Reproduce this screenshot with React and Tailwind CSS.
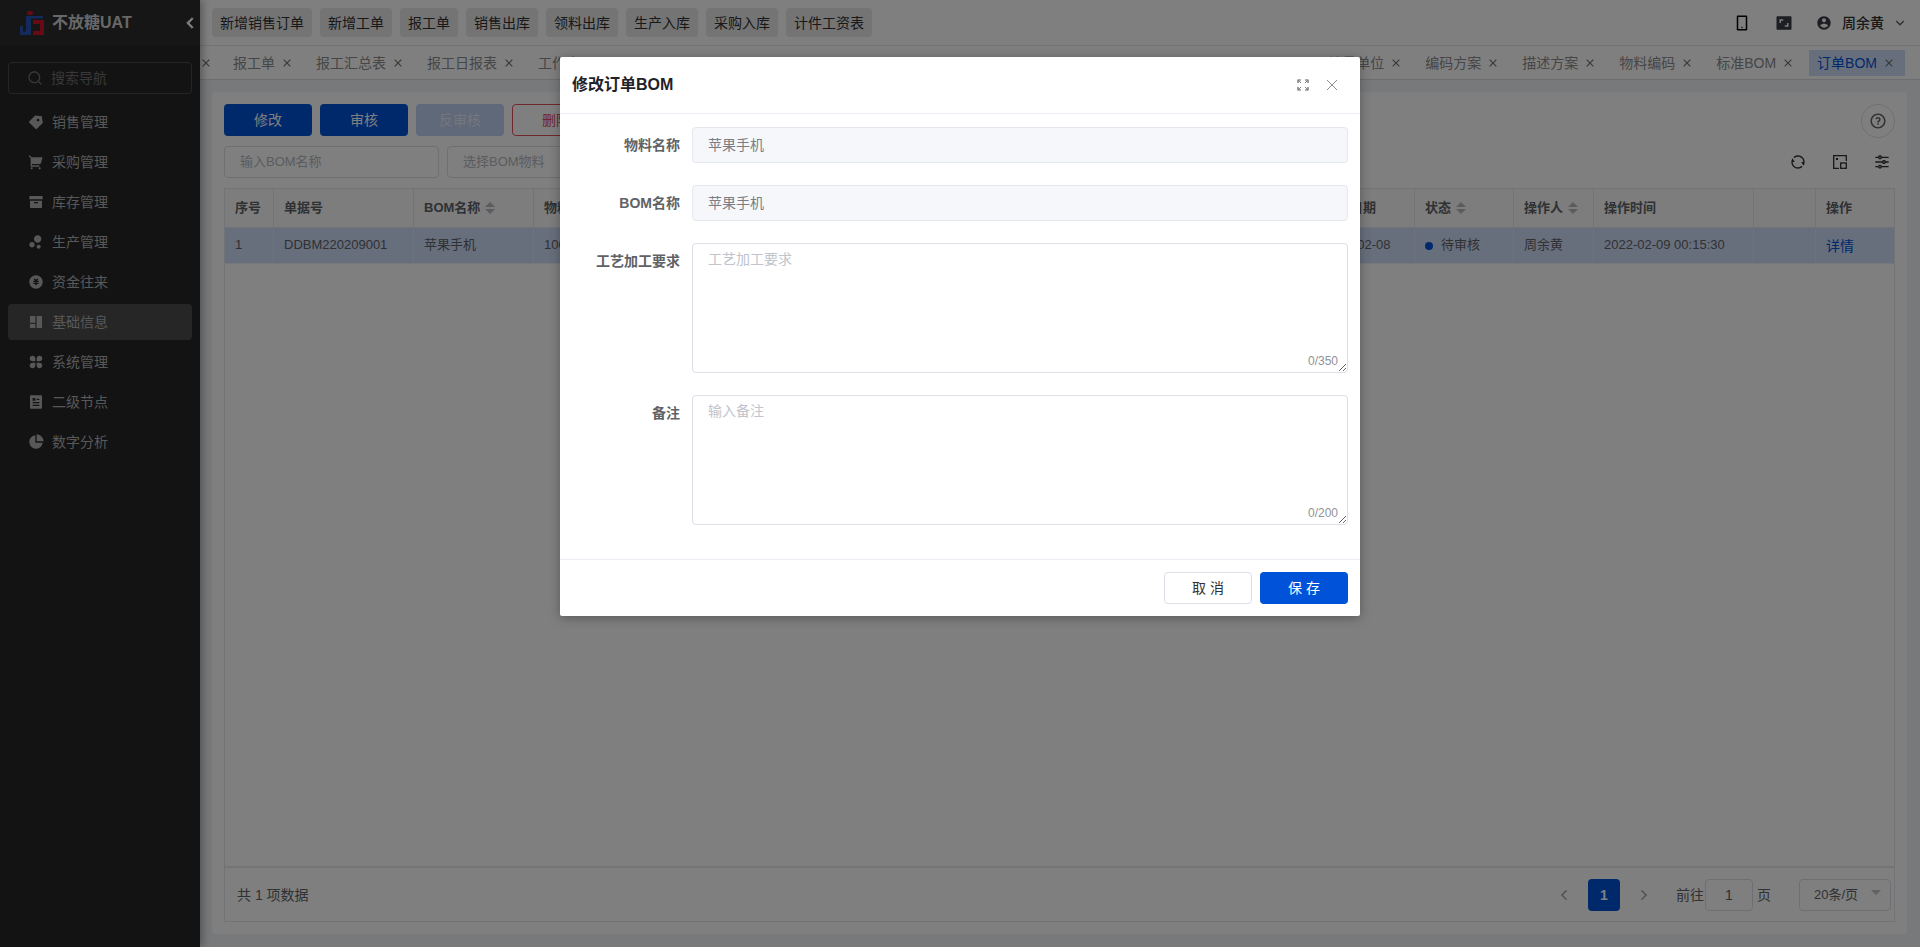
import {
  RiPriceTag3Fill,
  RiShoppingCart2Fill,
  RiArchiveFill,
  RiBubbleChartFill,
  RiMoneyCnyCircleFill,
  RiAppsFill,
  RiArticleFill,
  RiPieChart2Fill,
  RiSearchLine,
  RiArrowLeftSLine,
  RiArrowRightSLine,
  RiArrowDownSLine,
  RiCloseLine,
  RiSmartphoneLine,
  RiAspectRatioFill,
  RiAccountCircleFill,
  RiQuestionLine,
  RiRefreshLine,
  RiEqualizerLine,
} from "react-icons/ri";

function LayoutIcon({ className }) {
  return (
    <svg viewBox="0 0 24 24" fill="currentColor" className={className}>
      <path d="M3 3h8v10H3zM3 15h8v6H3zM13 3h8v18h-8z" />
    </svg>
  );
}

const menus = [
  { name: "销售管理", icon: RiPriceTag3Fill },
  { name: "采购管理", icon: RiShoppingCart2Fill },
  { name: "库存管理", icon: RiArchiveFill },
  { name: "生产管理", icon: RiBubbleChartFill },
  { name: "资金往来", icon: RiMoneyCnyCircleFill },
  { name: "基础信息", icon: LayoutIcon, active: true },
  { name: "系统管理", icon: RiAppsFill },
  { name: "二级节点", icon: RiArticleFill },
  { name: "数字分析", icon: RiPieChart2Fill },
];

const quickLinks = ["新增销售订单", "新增工单", "报工单", "销售出库", "领料出库", "生产入库", "采购入库", "计件工资表"];
const leftTabs = ["报工单", "报工汇总表", "报工日报表", "工作中心"];
const rightTabs = ["计量单位", "编码方案", "描述方案", "物料编码", "标准BOM"];

const columns = [
  { title: "序号", value: "1", width: "w-[49px]" },
  { title: "单据号", value: "DDBM220209001", width: "w-[140px]" },
  { title: "BOM名称", value: "苹果手机", width: "w-[120px]", sort: true },
  { title: "物料编码", value: "1001001", width: "w-[200px]", sort: true },
  { title: "物料名称", value: "苹果手机", width: "w-[200px]" },
  { title: "规格型号", value: "", width: "w-[200px]" },
  { title: "版本号", value: "V1", width: "w-[180px]" },
  { title: "单据日期", value: "2022-02-08", width: "w-[101px]" },
  { title: "状态", value: "待审核", width: "w-[99px]", sort: true, status: true },
  { title: "操作人", value: "周余黄", width: "w-[80px]", sort: true },
  { title: "操作时间", value: "2022-02-09 00:15:30", width: "w-[160px]" },
  { title: "", value: "", width: "w-[62px]" },
  { title: "操作", value: "详情", width: "flex-1", link: true },
];

function Logo() {
  return (
    <svg width="24" height="24" viewBox="0 0 24 24" className="shrink-0">
      <rect x="7" y="0" width="6" height="4" rx="2" fill="#d0142c" />
      <path d="M6 5h17v2.5H11V24H0v-9h3v5.500h3z" fill="#2456b4" />
      <path d="M13 9h11v15H13v-4h7v-7h-7z" fill="#d0142c" />
    </svg>
  );
}

function SortCaret() {
  return (
    <span className="ml-[5px] inline-flex flex-col gap-[2px]">
      <span className="h-0 w-0 border-x-[5px] border-b-[5px] border-x-transparent border-b-[#b5b8bf]" />
      <span className="h-0 w-0 border-x-[5px] border-t-[5px] border-x-transparent border-t-[#b5b8bf]" />
    </span>
  );
}

function DensityIcon() {
  return (
    <svg width="16" height="16" viewBox="0 0 16 16" fill="none" stroke="#303133" strokeWidth="1.3">
      <path d="M7 14.3H1.700V1.700h12.600V7" />
      <rect x="8.700" y="9" width="5.600" height="5.300" />
      <rect x="4" y="4" width="2" height="2" fill="#303133" stroke="none" />
    </svg>
  );
}

function ExpandIcon() {
  return (
    <svg width="12" height="12" viewBox="0 0 12 12" fill="none" stroke="#606060" strokeWidth="1.200" className="ml-auto">
      <path d="M1 4V1h3M8 1h3v3M11 8v3H8M4 11H1V8" />
      <path d="M2 2l2 2M10 2L8 4M10 10L8 8M2 10l2-2" strokeWidth="0.800" />
    </svg>
  );
}

function ThinClose() {
  return (
    <svg width="12" height="12" viewBox="0 0 12 12" stroke="#8c8c8c" strokeWidth="1" className="ml-[17px]">
      <path d="M1 1l10 10M11 1L1 11" />
    </svg>
  );
}

function Tab({ name, active }) {
  return (
    <div
      className={`flex h-[26px] shrink-0 items-center gap-[7px] pr-[11px] pl-2 text-sm ${
        active ? "bg-[#d0dff9] text-[#0052d9]" : "text-[#8c8c8c]"
      }`}
    >
      <span>{name}</span>
      <RiCloseLine className="-mx-[2px] size-[14px] text-[#707070]" />
    </div>
  );
}

function Field({ label, children }) {
  return (
    <div className="mb-[22px] flex gap-3">
      <label className="w-[108px] shrink-0 pt-[9px] text-right text-sm leading-[18px] font-bold text-[#606266]">
        {label}
      </label>
      <div className="relative flex-1">{children}</div>
    </div>
  );
}

function ReadInput({ value }) {
  return (
    <input
      readOnly
      value={value}
      className="block h-9 w-full rounded border border-[#e4e7ed] bg-[#f5f7fa] px-[15px] pb-[2px] text-sm text-[#7a7d85] outline-none"
    />
  );
}

function TextArea({ placeholder, count }) {
  return (
    <>
      <textarea
        readOnly
        placeholder={placeholder}
        className="block h-[130px] w-full rounded border border-[#dcdfe6] bg-white px-[15px] py-[5px] text-sm leading-[20px] text-[#606266] outline-none placeholder:text-[#c0c4cc]"
      />
      <span className="absolute right-[10px] bottom-[4px] text-xs leading-4 text-[#909399]">{count}</span>
    </>
  );
}

export default function App() {
  return (
    <div className="relative flex h-screen w-full overflow-hidden bg-[#f0f2f5] font-['Liberation_Sans','Noto_Sans_CJK_SC',sans-serif] text-sm">
      <aside className="z-10 flex w-[200px] shrink-0 flex-col bg-[#262626] shadow-[2px_0_8px_rgba(0,0,0,0.35)]">
        <div className="flex h-[46px] items-center bg-[#2c2c2c] pl-5">
          <Logo />
          <span className="ml-2 text-base font-bold text-[#d0d0d0]">不放糖UAT</span>
          <RiArrowLeftSLine className="ml-auto size-5 stroke-1 text-white" />
        </div>
        <div className="mx-2 mt-4 flex h-8 items-center rounded border border-[#4a4a4a] px-[18px] text-[#707070]">
          <RiSearchLine className="mr-2 size-4 text-[#707070]" />
          搜索导航
        </div>
        <nav className="mt-[10px] flex flex-col gap-1">
          {menus.map((menu) => {
            const Icon = menu.icon;
            return (
              <div
                key={menu.name}
                className={`mx-2 flex h-9 items-center gap-2 rounded pl-[20px] text-[#b0b0b0] ${
                  menu.active ? "bg-[#4c4c4c]" : ""
                }`}
              >
                <Icon className="size-[16px] shrink-0" />
                <span>{menu.name}</span>
              </div>
            );
          })}
        </nav>
      </aside>

      <div className="flex min-w-0 flex-1 flex-col">
        <header className="flex h-[46px] shrink-0 items-center gap-2 border-b border-[#e4e7ed] bg-white pr-[12px] pl-3">
          {quickLinks.map((link) => (
            <span key={link} className="flex h-[29px] items-center rounded bg-[#e8e8e8] px-2 text-[#303133]">
              {link}
            </span>
          ))}
          <div className="ml-auto flex items-center text-[#303133]">
            <RiSmartphoneLine className="size-[18px] text-black" />
            <RiAspectRatioFill className="ml-6 size-[18px] text-[#3a3d44]" />
            <RiAccountCircleFill className="ml-[23px] size-4 text-[#3a3d44]" />
            <span className="ml-[10px] font-medium">周余黄</span>
            <RiArrowDownSLine className="ml-2 size-4 text-[#606266]" />
          </div>
        </header>

        <div className="flex h-[34px] shrink-0 items-center justify-between overflow-hidden border-b border-[#d8dbe0] bg-white pr-[15px]">
          <div className="flex items-center">
            <RiCloseLine className="-ml-[1px] size-[14px] text-[#707070]" />
            <div className="flex items-center gap-[5px] pl-[12px]">
              {leftTabs.map((tab) => (
                <Tab key={tab} name={tab} />
              ))}
            </div>
          </div>
          <div className="flex items-center gap-[5px]">
            {rightTabs.map((tab) => (
              <Tab key={tab} name={tab} />
            ))}
            <Tab name="订单BOM" active />
          </div>
        </div>

        <main className="flex min-h-0 flex-1 flex-col pt-[12px] pr-[13px] pb-[13px] pl-3">
          <div className="flex min-h-0 flex-1 flex-col rounded bg-white p-3">
            <div className="flex h-[34px] items-start justify-between">
              <div className="flex gap-2">
                <button className="h-8 w-[88px] rounded bg-[#0052d9] text-sm text-white">修改</button>
                <button className="h-8 w-[88px] rounded bg-[#0052d9] text-sm text-white">审核</button>
                <button className="h-8 w-[88px] rounded bg-[#c0d2f5] text-sm text-[#e8eefb]">反审核</button>
                <button className="h-8 w-[88px] rounded border border-[#e34d59] text-sm text-[#e34d59]">删除</button>
              </div>
              <span className="flex size-[34px] items-center justify-center rounded-full border border-[#dcdfe6]">
                <RiQuestionLine className="size-[18px] text-[#606266]" />
              </span>
            </div>

            <div className="mt-2 flex h-8 items-center justify-between">
              <div className="flex gap-2">
                <div className="flex h-8 w-[215px] items-center rounded border border-[#dcdfe6] px-[15px] text-[13px] text-[#b5b8bf]">
                  输入BOM名称
                </div>
                <div className="flex h-8 w-[215px] items-center rounded border border-[#dcdfe6] px-[15px] text-[13px] text-[#b5b8bf]">
                  选择BOM物料
                </div>
              </div>
              <div className="flex items-center gap-[26px] pr-[5px] text-[#303133]">
                <RiRefreshLine className="size-4" />
                <DensityIcon />
                <RiEqualizerLine className="size-4" />
              </div>
            </div>

            <div className="mt-[10px] flex min-h-0 flex-1 flex-col border border-[#e4e7ed]">
              <div className="flex h-[39px] shrink-0 border-b border-[#e4e7ed] bg-[#fafafa]">
                {columns.map((col, i) => (
                  <div
                    key={i}
                    className={`${col.width} flex items-center border-r border-[#e4e7ed] px-[10px] text-[13px] font-bold whitespace-nowrap text-[#606266] last:border-r-0`}
                  >
                    {col.title}
                    {col.sort && <SortCaret />}
                  </div>
                ))}
              </div>
              <div className="flex h-9 shrink-0 border-b border-[#ebeef5] bg-[#d0dff9]">
                {columns.map((col, i) => (
                  <div
                    key={i}
                    className={`${col.width} flex items-center border-r border-[#dce6f5] px-[10px] whitespace-nowrap last:border-r-0 ${
                      col.link ? "text-sm text-[#0052d9]" : "text-[13px] text-[#606266]"
                    }`}
                  >
                    {col.status && <span className="mr-2 size-2 rounded-full bg-[#0052d9]" />}
                    {col.value}
                  </div>
                ))}
              </div>
              <div className="flex-1 border-b-2 border-[#e8e8e8]" />
              <div className="flex h-[53px] shrink-0 items-center pr-[3px] pl-3 text-sm text-[#606266]">
                <span>共 1 项数据</span>
                <div className="ml-auto flex items-center">
                  <RiArrowLeftSLine className="size-5 text-[#a8abb2]" />
                  <span className="mx-[14px] flex size-8 items-center justify-center rounded bg-[#0052d9] font-bold text-white">
                    1
                  </span>
                  <RiArrowRightSLine className="size-5 text-[#a8abb2]" />
                  <span className="ml-[22px]">前往</span>
                  <span className="ml-[1px] flex h-8 w-[48px] items-center justify-center rounded border border-[#dcdfe6]">1</span>
                  <span className="ml-[4px]">页</span>
                  <div className="relative ml-[28px] flex h-8 w-[92px] items-center rounded border border-[#dcdfe6] pt-[2px] pl-[14px] text-[13px]">
                    20条/页
                    <span className="absolute top-[10px] right-[9px] h-0 w-0 border-x-[5px] border-t-[5px] border-x-transparent border-t-[#c0c4cc]" />
                  </div>
                </div>
              </div>
            </div>
          </div>
        </main>
      </div>

      <div className="absolute inset-0 z-20 flex justify-center bg-black/50">
        <div className="mt-[57px] h-fit w-[800px] rounded-[2px] bg-white shadow-[0_2px_12px_rgba(0,0,0,0.3)]">
          <div className="flex h-[57px] items-center border-b border-[#ebeef5] pr-[22px] pl-3">
            <span className="text-base font-bold text-[#1f2329]">修改订单BOM</span>
            <ExpandIcon />
            <ThinClose />
          </div>
          <div className="px-3 pt-[13px] pb-[12px]">
            <Field label="物料名称">
              <ReadInput value="苹果手机" />
            </Field>
            <Field label="BOM名称">
              <ReadInput value="苹果手机" />
            </Field>
            <Field label="工艺加工要求">
              <TextArea placeholder="工艺加工要求" count="0/350" />
            </Field>
            <Field label="备注">
              <TextArea placeholder="输入备注" count="0/200" />
            </Field>
          </div>
          <div className="flex h-[57px] items-center justify-end gap-2 border-t border-[#ebeef5] px-3">
            <button className="h-8 w-[88px] rounded border border-[#dcdfe6] bg-white text-sm text-[#303133]">取 消</button>
            <button className="h-8 w-[88px] rounded bg-[#0052d9] text-sm text-white">保 存</button>
          </div>
        </div>
      </div>
    </div>
  );
}
